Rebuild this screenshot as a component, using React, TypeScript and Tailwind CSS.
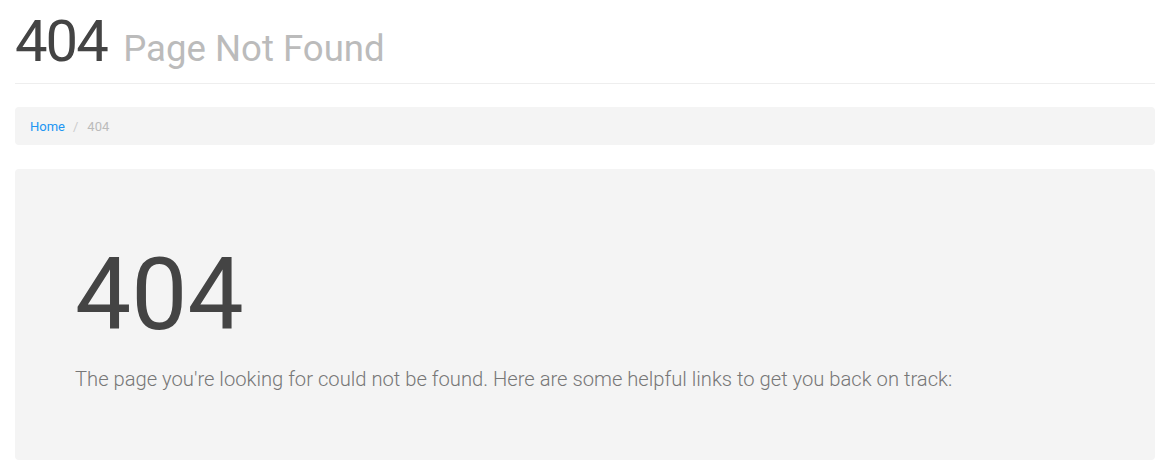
export default function App() {
  return (
    <div className="min-h-screen bg-white font-['Roboto',sans-serif]">
      <div className="ml-[15px] w-[1140px]">
        {/* page header */}
        <div className="border-b border-[#eee] pt-[10px] pb-[9px]">
          <h1 className="text-[58px] leading-[1.1] text-[#444] font-normal">
            <span className="tracking-[-2px]">404</span>{' '}
            <small className="ml-[2px] text-[36.6px] text-[#bbb] font-normal">Page Not Found</small>
          </h1>
        </div>

        {/* breadcrumb */}
        <ol className="mt-[23px] flex items-center rounded bg-[#f4f4f4] px-[15px] pt-[10px] pb-[8px] text-[13px] leading-[20px]">
          <li>
            <a href="#" className="text-[#2196f3]">Home</a>
          </li>
          <li className="pl-[8px] pr-[9px] text-[#ccc]">/</li>
          <li className="text-[#bbb]">404</li>
        </ol>

        {/* error panel */}
        <div className="mt-[24px] rounded bg-[#f4f4f4] px-[60px] pt-[71px] pb-[67px]">
          <h2 className="text-[100px] leading-[1.1] text-[#444] font-normal">404</h2>
          <p className="mt-[15px] text-[20.2px] leading-[1.4] font-light text-[#777]">
            The page you're looking for could not be found. Here are some helpful links to get you back on track:
          </p>
        </div>
      </div>
    </div>
  )
}
